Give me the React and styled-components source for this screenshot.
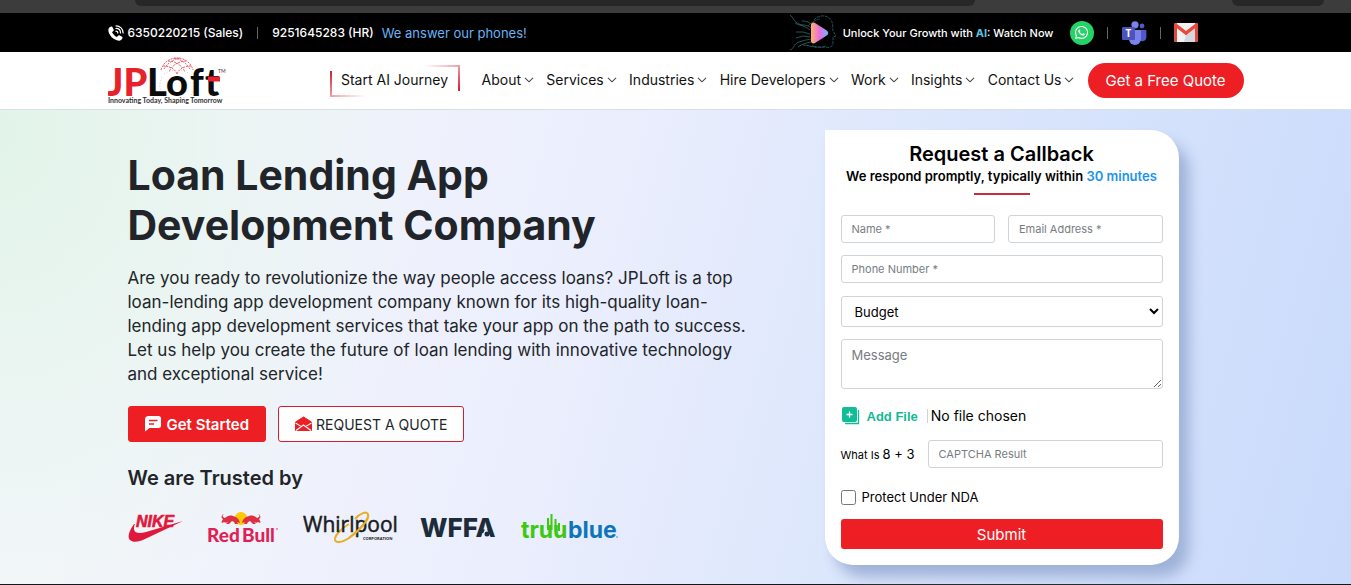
import React, { useState } from "react";
import styled, { createGlobalStyle } from "styled-components";
import { BsChevronDown } from "react-icons/bs";
import { FaWhatsapp } from "react-icons/fa";

const menu = ["About", "Services", "Industries", "Hire Developers", "Work", "Insights", "Contact Us"];

const PhoneIcon = () => (
  <svg width="16" height="16" viewBox="1 1 22 22" aria-hidden="true">
    <path d="M6.600 10.800c1.400 2.800 3.800 5.100 6.600 6.600l2-2c.4-.4.9-.5 1.400-.3l3.800 1.900c.6.300.8.9.6 1.500-.6 2.400-2.400 4-5 4C9 22.500 1.500 15 1.500 8c0-2.600 1.600-4.400 4-5 .6-.2 1.200 0 1.500.6l1.900 3.800c.2.500.1 1-.3 1.400z" fill="#fff" />
    <path d="M12 9.500c1.500 0 2.500 1 2.500 2.500M12 5.800c3.600 0 6.200 2.600 6.200 6.200M12 2.200c5.500 0 9.800 4.300 9.800 9.800" fill="none" stroke="#fff" strokeWidth="1.700" strokeLinecap="round" />
  </svg>
);

const TeamsIcon = () => (
  <svg width="26" height="26" viewBox="0 0 26 26" role="img" aria-label="Teams">
    <circle cx="21" cy="6" r="2.4" fill="#5059c9" />
    <path d="M18 10h6.4a1 1 0 0 1 1 1v6.2a4 4 0 0 1-7.4 2z" fill="#5059c9" />
    <circle cx="14" cy="4.8" r="3.6" fill="#7b83eb" />
    <path d="M9 10h10a1 1 0 0 1 1 1v8a6 6 0 0 1-12 0z" fill="#7b83eb" />
    <rect x="1" y="7" width="13" height="13" rx="1.2" fill="#4b53bc" />
    <text x="7.5" y="17" textAnchor="middle" fontFamily="Open Sans, sans-serif" fontSize="10" fontWeight="700" fill="#fff">T</text>
  </svg>
);

const GmailIcon = () => (
  <svg width="24" height="20" viewBox="0 0 24 20" role="img" aria-label="Gmail">
    <rect x="0" y="0" width="24" height="19" rx="2" fill="#f2f2f2" />
    <path d="M12 12 21 6v13H10z" fill="#d5d8dc" />
    <path d="M0 2a2 2 0 0 1 3-1.7V19H2a2 2 0 0 1-2-2zM24 2a2 2 0 0 0-3-1.7V19h1a2 2 0 0 0 2-2z" fill="#dd4b3e" />
    <path d="M.7 3.5 12 12.2 23.3 3.5 22 .3 12 8 2 .3z" fill="#e84a3c" />
  </svg>
);

const AiHead = () => (
  <svg width="50" height="38" viewBox="0 0 50 38" aria-hidden="true">
    <defs>
      <linearGradient id="play" x1="0" x2="1">
        <stop offset="0" stopColor="#ffb36b" />
        <stop offset=".5" stopColor="#e86be0" />
        <stop offset="1" stopColor="#6fb6ff" />
      </linearGradient>
    </defs>
    <g fill="none" stroke="#3f8f96" strokeWidth=".6">
      <path d="M25 6c4-5 13-6 17 0 3 5 1 8 2 11l3 5-3 1v6c0 4-4 5-8 4H26" strokeDasharray="3 1" />
      <path d="M1 1c4 3 4 7 9 9s8 0 12 4M6 9c5 3 9 2 15 7M7 18h7l7 2M7 24l7-2 7 1M1 36c5-2 3-6 9-8s7-2 12-3M9 33c4-3 8-4 13-5M14 31c6 0 7 2 13 2M13 7c6 0 7 2 11 4" />
      <path d="M19 12c3-4 8-6 12-7M23 31c5 3 10 3 14 1" stroke="#2c5f70" />
    </g>
    <path d="M22 11c0-2 2-3 4-2l11 7c3 2 3 4 0 6l-11 7c-2 1-4 0-4-2z" fill="url(#play)" />
  </svg>
);

const Logo = () => (
  <svg width="118" height="50" viewBox="0 0 118 50" role="img" aria-label="JPLoft - Innovating Today, Shaping Tomorrow">
    <g fill="none" stroke="#e2505a" strokeWidth=".9" strokeDasharray="2 1">
      <path d="M53 14c2-7 8-12 16-12s14 5 16 12" />
      <path d="M55 10c9 0 13 5 14 8M60 5c9 0 15 6 17 11M66 2c7 1 13 6 16 11M83 10c-9 0-13 5-14 8M78 5c-9 0-15 6-17 11M72 2c-7 1-13 6-16 11" />
    </g>
    <g fill="none" stroke="#f3bcc0" strokeWidth="1" strokeDasharray="1 2">
      <path d="M56 18c6-5 20-5 26 0M54 21c-3 6-3 13 1 18M84 21c3 6 3 13-1 18M58 41c5 3 14 3 19 0" />
    </g>
    <g fontFamily="Lato, sans-serif" fontSize="38" fontWeight="900">
      <text x="-1" y="40" fill="#e7222c">JP</text>
      <text x="39" y="40" fill="#0b0b0b">L</text>
      <text x="58" y="40" fill="#0b0b0b">o</text>
      <text x="82" y="40" fill="#0b0b0b">f</text>
      <text x="97" y="40" fill="#0b0b0b">t</text>
    </g>
    <path d="M100 23h12" stroke="#e7222c" strokeWidth="5" />
    <text x="110" y="17" fontFamily="Lato, sans-serif" fontSize="5" fill="#333">TM</text>
    <text x="0" y="47" fontFamily="Lato, sans-serif" fontSize="7" fontWeight="700" fill="#333">Innovating Today, Shaping Tomorrow</text>
  </svg>
);

const ChatIcon = () => (
  <svg width="18" height="16" viewBox="0 0 18 16" aria-hidden="true">
    <path d="M3.500 0h10A2.500 2.500 0 0 1 16 2.500v7a2.500 2.500 0 0 1-2.500 2.500H4.500L0 15.500V3.500A3.500 3.500 0 0 1 3.500 0z" fill="#fff" />
    <path d="M4 4.500h8.500M4 8h5" stroke="#ed1f24" strokeWidth="1.600" />
  </svg>
);

const MailIcon = () => (
  <svg width="17" height="16" viewBox="0 0 17 16" aria-hidden="true">
    <path d="M8.500 1 16.500 6v8.500H.5V6z" fill="#ed1f24" stroke="#ed1f24" strokeLinejoin="round" />
    <path d="m.5 7 6 3.600M16.500 7l-6 3.600M1 14.500 8.500 9l7.500 5.500" fill="none" stroke="#fff" strokeWidth="1.100" />
  </svg>
);

const AddIcon = () => (
  <svg width="18" height="18" viewBox="0 0 18 18" aria-hidden="true">
    <path d="M16.500 3v13.500H3" fill="none" stroke="#12bd96" strokeWidth="1.300" />
    <rect x="0" y="0" width="15" height="15" rx="2" fill="#12bd96" />
    <path d="M7.500 4.500v6M4.500 7.500h6" stroke="#fff" strokeWidth="1.300" />
  </svg>
);

const Nike = () => (
  <svg width="56" height="32" viewBox="0 0 56 32" role="img" aria-label="Nike">
    <path d="M6 12C1 19-1 25 2 28c3 3 9 2 15-1L55 9 18 20c-7 2-12 1-12-3 0-2 0-3 1-5z" fill="#e0193c" />
    <text x="8" y="15" fontFamily="Liberation Sans, sans-serif" fontSize="16" fontWeight="700" fontStyle="italic" fill="#e0193c" stroke="#e0193c" strokeWidth=".6">NIKE</text>
  </svg>
);

const RedBull = () => (
  <svg width="72" height="34" viewBox="0 0 72 34" role="img" aria-label="Red Bull">
    <circle cx="34" cy="7.500" r="6.500" fill="#ffc906" />
    <path d="M33 12c-1-4-3-6-7-7-3-1-6 0-8 2l-2-1c-1-1 0-2 1-3-3 1-3 4-1 5-1 2-2 3-1 4l2-1c1 1 2 1 4 0l-2 2h3l3-3 2 1 1 2h3l-1-2z" fill="#dd3045" />
    <path d="M35 12c1-4 3-6 7-7 3-1 6 0 8 2l2-1c1-1 0-2-1-3 3 1 3 4 1 5 1 2 2 3 1 4l-2-1c-1 1-2 1-4 0l2 2h-3l-3-3-2 1-1 2h-3l1-2z" fill="#dd3045" />
    <text x="0" y="31" fontFamily="Lato, sans-serif" fontSize="19" fontWeight="900" fill="#df1f55">Red</text>
    <text x="35" y="31" fontFamily="Lato, sans-serif" fontSize="19" fontWeight="900" fill="#df1f55">Bull</text>
    <circle cx="70" cy="18" r=".8" fill="#df1f55" />
  </svg>
);

const Whirlpool = () => (
  <svg width="95" height="36" viewBox="0 0 95 36" role="img" aria-label="Whirlpool Corporation">
    <path d="M53 9C58 3 65 1 66 4c2 5-9 17-19 24-8 5-13 5-14 2-1-4 7-12 14-16" fill="none" stroke="#e9ae26" strokeWidth="2" />
    <text x="1" y="22" fontFamily="Open Sans, sans-serif" fontSize="21" fontWeight="500" fill="#191b20" stroke="#191b20" strokeWidth=".5">Whirlpool</text>
    <path d="M66 4c2 5-9 17-19 24" fill="none" stroke="#e9ae26" strokeWidth="2" />
    <text x="61" y="30" fontFamily="Open Sans, sans-serif" fontSize="4" fontWeight="700" fill="#191b20">CORPORATION</text>
  </svg>
);

const Wffa = () => (
  <svg width="78" height="28" viewBox="0 0 78 28" role="img" aria-label="WFFA">
    <text x="0" y="23" fontFamily="Inter, sans-serif" fontSize="26" fontWeight="800" fill="#1c2c38">WFFA</text>
    <path d="m66 13-5 11h10z" fill="#eceffb" />
    <circle cx="67" cy="20" r="2.500" fill="#1c2c38" />
  </svg>
);

const TruuBlue = () => (
  <svg width="98" height="32" viewBox="0 0 98 32" role="img" aria-label="truublue">
    <g fontFamily="Inter, sans-serif" fontSize="23" fontWeight="700">
      <text x="0" y="26" fill="#3cc90e">truu</text>
      <text x="47" y="26" fill="#0d76b9">blue</text>
    </g>
    <path d="M30.500 18V2M34.500 20V7M27 18V6M38 19v-8" stroke="#3cc90e" strokeWidth="2" />
    <circle cx="96" cy="25" r=".7" fill="#0d76b9" />
  </svg>
);

const App = () => {
  const [form, setForm] = useState({});
  const [fileName, setFileName] = useState("No file chosen");

  const handleChange = (e) => {
    setForm({ ...form, [e.target.name]: e.target.value });
  };

  const handleFile = (e) => {
    const file = e.target.files[0];
    setFileName(file ? file.name : "No file chosen");
  };

  const handleSubmit = (e) => {
    e.preventDefault();
  };

  return (
    <Page>
      <GlobalStyle />
      <BrowserEdge>
        <EdgePill $grow={840} />
        <EdgePill $grow={92} />
      </BrowserEdge>

      {/* contact bar */}
      <TopBar>
        <TopInner>
          <Phones>
            <PhoneIcon />
            <a href="tel:6350220215">6350220215 (Sales)</a>
            <Divider $space={10} />
            <a href="tel:9251645283">9251645283 (HR)</a>
            <Note>We answer our phones!</Note>
          </Phones>
          <Watch href="#watch">
            <AiHead />
            <span>Unlock Your Growth with <b>AI</b>: Watch Now</span>
          </Watch>
          <Socials>
            <WhatsApp href="#whatsapp" aria-label="WhatsApp"><FaWhatsapp size={15} /></WhatsApp>
            <Divider $space={13} />
            <a href="#teams"><TeamsIcon /></a>
            <Divider $space={13} />
            <a href="#mail"><GmailIcon /></a>
          </Socials>
        </TopInner>
      </TopBar>

      {/* navigation */}
      <Header>
        <HeaderInner>
          <LogoLink href="#home"><Logo /></LogoLink>
          <Journey href="#ai">Start AI Journey</Journey>
          <Nav>
            {menu.map((item) => (
              <NavLink key={item} href="#menu">
                {item} <BsChevronDown size={10} strokeWidth={0.5} />
              </NavLink>
            ))}
          </Nav>
          <QuoteButton type="button">Get a Free Quote</QuoteButton>
        </HeaderInner>
      </Header>

      {/* hero */}
      <Hero>
        <HeroInner>
          <Intro>
            <Title>Loan Lending App<br />Development Company</Title>
            <Lead>
              Are you ready to revolutionize the way people access loans? JPLoft is a top<br />
              loan-lending app development company known for its high-quality loan-<br />
              lending app development services that take your app on the path to success.<br />
              Let us help you create the future of loan lending with innovative technology<br />
              and exceptional service!
            </Lead>
            <Actions>
              <ActionButton type="button" $primary><ChatIcon />Get Started</ActionButton>
              <ActionButton type="button"><MailIcon />REQUEST A QUOTE</ActionButton>
            </Actions>
            <Trusted>We are Trusted by</Trusted>
            <Brands>
              <Nike />
              <RedBull />
              <Whirlpool />
              <Wffa />
              <TruuBlue />
            </Brands>
          </Intro>

          <Card onSubmit={handleSubmit}>
            <CardTitle>Request a Callback</CardTitle>
            <CardSub>We respond promptly, typically within <em>30 minutes</em></CardSub>
            <Rule />
            <Pair>
              <Field name="name" aria-label="Name" placeholder="Name *" onChange={handleChange} />
              <Field name="email" type="email" aria-label="Email Address" placeholder="Email Address *" onChange={handleChange} />
            </Pair>
            <Field name="phone" type="tel" aria-label="Phone Number" placeholder="Phone Number *" onChange={handleChange} />
            <Budget name="budget" aria-label="Budget" onChange={handleChange}>
              <option value="">Budget</option>
              <option value="10k">$5k - $10k</option>
              <option value="25k">$10k - $25k</option>
            </Budget>
            <Message name="message" aria-label="Message" placeholder="Message" onChange={handleChange} />
            <FileRow>
              <FileLabel htmlFor="file"><AddIcon />Add File</FileLabel>
              <HiddenFile id="file" type="file" onChange={handleFile} />
              <FileName>{fileName}</FileName>
            </FileRow>
            <Captcha>
              <label htmlFor="captcha">What Is <span>8 + 3</span></label>
              <Field id="captcha" name="captcha" placeholder="CAPTCHA Result" onChange={handleChange} />
            </Captcha>
            <Nda>
              <input id="nda" type="checkbox" />
              <label htmlFor="nda">Protect Under NDA</label>
            </Nda>
            <Submit type="submit">Submit</Submit>
          </Card>
        </HeroInner>
      </Hero>
    </Page>
  );
};

export default App;

const GlobalStyle = createGlobalStyle`
  * {
    box-sizing: border-box;
  }
  body {
    margin: 0;
    font-family: Inter, "Open Sans", sans-serif;
    color: #212529;
    background: #15171c;
  }
  a {
    color: inherit;
    text-decoration: none;
  }
  button, input, select, textarea {
    font-family: inherit;
  }
  svg {
    flex: none;
    display: block;
  }
`;

const Page = styled.div`
  overflow: hidden;
`;

const BrowserEdge = styled.div`
  display: flex;
  justify-content: space-between;
  height: 13px;
  padding: 0 2% 0 10%;
  background: #3c3c3c;
`;

const EdgePill = styled.div`
  flex: 0 1 ${({ $grow }) => $grow}px;
  height: 6px;
  border-radius: 0 0 12px 12px;
  background: #272727;
`;

const TopBar = styled.div`
  background: #000;
  color: #fff;
`;

const Inner = styled.div`
  display: flex;
  align-items: center;
  max-width: 1168px;
  margin: 0 auto;
  padding: 0 16px;
`;

const TopInner = styled(Inner)`
  height: 39px;
`;

const Phones = styled.div`
  display: flex;
  align-items: center;
  flex: 1;
  gap: 4px;
  font-size: 12px;
  font-weight: 500;
  white-space: nowrap;
`;

const Divider = styled.i`
  width: 1px;
  height: 12px;
  margin: 0 ${({ $space }) => $space}px;
  background: #666;
`;

const Note = styled.span`
  margin-left: 4px;
  color: #69b3f5;
  font-size: 13px;
  font-weight: 400;
`;

const Watch = styled.a`
  display: flex;
  align-items: center;
  gap: 4px;
  font-size: 11px;
  font-weight: 500;
  white-space: nowrap;

  b {
    color: #5cc4e0;
  }
`;

const Socials = styled.div`
  display: flex;
  align-items: center;
  margin: 0 46px 0 16px;
`;

const WhatsApp = styled.a`
  display: grid;
  place-items: center;
  width: 24px;
  height: 24px;
  border-radius: 50%;
  background: #25d366;
`;

const Header = styled.header`
  background: #fff;
  border-bottom: 1px solid #d9e0e4;
`;

const HeaderInner = styled(Inner)`
  height: 57px;
`;

const LogoLink = styled.a`
  margin-right: auto;
`;

const Journey = styled.a`
  width: 130px;
  padding: 4px 0 6px;
  border: 2px solid transparent;
  font-size: 14px;
  line-height: 18px;
  text-align: center;
  color: #111;
  white-space: nowrap;
  background:
    linear-gradient(to top, #f0a0a8, #d0202e) left bottom / 2px 26px no-repeat border-box,
    linear-gradient(to right, #f0a0a8, #fff) left bottom / 36px 2px no-repeat border-box,
    linear-gradient(to bottom, #f0a0a8, #d0202e) right top / 2px 26px no-repeat border-box,
    linear-gradient(to left, #f0a0a8, #fff) right top / 36px 2px no-repeat border-box;
`;

const Nav = styled.nav`
  display: flex;
  justify-content: space-between;
  width: 593px;
  margin: 0 13px 0 22px;
  padding-bottom: 2px;
`;

const NavLink = styled.a`
  display: flex;
  align-items: center;
  gap: 3px;
  font-size: 14px;
  color: #111;
  white-space: nowrap;
`;

const QuoteButton = styled.button`
  width: 156px;
  height: 35px;
  border: 0;
  border-radius: 18px;
  background: #ed1f24;
  color: #fff;
  font-size: 15px;
  white-space: nowrap;
`;

const Hero = styled.main`
  background:
    radial-gradient(ellipse 32% 110% at 0% 5%, #e2f4e9, transparent),
    linear-gradient(105deg, #f4f6fb 12%, #ebeefd 42%, #dbe6fc 66%, #c9dafb 100%);
  border-bottom: 1px solid #15171c;
`;

const HeroInner = styled(Inner)`
  align-items: flex-start;
  justify-content: space-between;
  padding: 20px 81px 19px 36px;
`;

const Intro = styled.section`
  padding-top: 20px;
`;

const Title = styled.h1`
  margin: 0;
  font-size: 41px;
  line-height: 50px;
  font-weight: 700;
`;

const Lead = styled.p`
  margin: 16px 0 20px;
  font-size: 17px;
  line-height: 24px;
`;

const Actions = styled.div`
  display: flex;
  gap: 12px;
`;

const ActionButton = styled.button`
  display: flex;
  align-items: center;
  justify-content: center;
  gap: 4px;
  height: 36px;
  padding: 0 16px;
  border: 1px solid ${({ $primary }) => ($primary ? "#ed1f24" : "#d0202e")};
  border-radius: 3px;
  background: ${({ $primary }) => ($primary ? "#ed1f24" : "#fff")};
  color: ${({ $primary }) => ($primary ? "#fff" : "#212529")};
  font-size: ${({ $primary }) => ($primary ? 15 : 14)}px;
  font-weight: ${({ $primary }) => ($primary ? 600 : 400)};
`;

const Trusted = styled.h2`
  margin: 24px 0 20px;
  font-size: 20px;
  line-height: 24px;
  font-weight: 600;
`;

const Brands = styled.div`
  display: flex;
  align-items: center;
  gap: 23px;
`;

const Card = styled.form`
  display: flex;
  flex-direction: column;
  width: 354px;
  padding: 12px 16px 16px;
  border-radius: 0 28px 28px 28px;
  background: #fff;
  color: #000;
  box-shadow: 10px 12px 14px #9fb2d8;
`;

const CardTitle = styled.h3`
  margin: 0;
  font-size: 20px;
  line-height: 24px;
  font-weight: 600;
  text-align: center;
`;

const CardSub = styled.p`
  margin: 0;
  font-size: 13px;
  line-height: 20px;
  font-weight: 600;
  text-align: center;
  white-space: nowrap;

  em {
    font-style: normal;
    color: #1a94ee;
  }
`;

const Rule = styled.hr`
  width: 56px;
  height: 2px;
  margin: 7px auto 20px;
  border: 0;
  background: #c92c3c;
`;

const Pair = styled.div`
  display: grid;
  grid-template-columns: 1fr 1fr;
  gap: 13px;
  margin-bottom: 12px;
`;

const Field = styled.input`
  width: 100%;
  height: 28px;
  padding: 0 10px;
  border: 1px solid #ced4da;
  border-radius: 3px;
  font-size: 11px;

  &::placeholder {
    color: #777d83;
  }
`;

const Budget = styled.select`
  height: 31px;
  margin: 13px 0 12px;
  padding: 0 0 0 9px;
  border: 1px solid #ced4da;
  border-radius: 3px;
  background: #fff;
  color: #000;
  font-size: 13px;
`;

const Message = styled.textarea`
  height: 50px;
  padding: 7px 10px;
  border: 1px solid #ced4da;
  border-radius: 3px;
  font-size: 13px;

  &::placeholder {
    color: #777d83;
  }
`;

const FileRow = styled.div`
  display: flex;
  align-items: center;
  height: 20px;
  margin: 17px 0 14px;
`;

const FileLabel = styled.label`
  display: flex;
  align-items: center;
  gap: 7px;
  padding-left: 1px;
  color: #12b995;
  font-family: "Liberation Sans", Arial, sans-serif;
  font-size: 13px;
  font-weight: 700;
`;

const HiddenFile = styled.input`
  width: 1px;
  height: 1px;
  margin: 0;
  opacity: 0;
`;

const FileName = styled.span`
  margin-left: 8px;
  padding-left: 3px;
  border-left: 1px solid #ced4da;
  font-size: 14px;
  line-height: 14px;
`;

const Captcha = styled.div`
  display: grid;
  grid-template-columns: 75px 1fr;
  align-items: center;
  gap: 12px;
  font-size: 11px;
  white-space: nowrap;

  span {
    font-size: 13px;
  }
`;

const Nda = styled.div`
  display: flex;
  align-items: center;
  gap: 6px;
  margin: 20px 0 12px;
  font-size: 13px;
  line-height: 19px;

  input {
    width: 15px;
    height: 15px;
    margin: 0;
  }
`;

const Submit = styled.button`
  height: 30px;
  border: 0;
  border-radius: 3px;
  background: #ed1f24;
  color: #fff;
  font-size: 15px;
`;
